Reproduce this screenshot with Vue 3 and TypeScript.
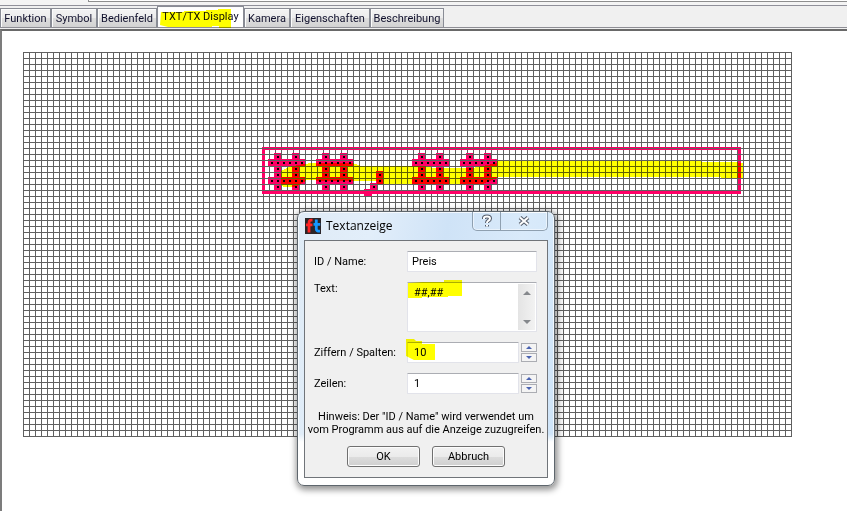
<script setup lang="ts">
import { ref } from 'vue'

const tabs = ['Funktion', 'Symbol', 'Bedienfeld', 'TXT/TX Display', 'Kamera', 'Eigenschaften', 'Beschreibung']
const activeTab = ref('TXT/TX Display')

const name = ref('Preis')
const text = ref('##,##')
const columns = ref(10)
const rows = ref(1)

interface Dot { x: number; y: number }

const CELL = 6
const columnsOfGrid = Array.from({ length: 129 }, (_, i) => i * CELL)
const rowsOfGrid = Array.from({ length: 65 }, (_, i) => i * CELL)

const hash = [
  '.#..#.',
  '######',
  '.#..#.',
  '.#..#.',
  '######',
  '.#..#.',
]
const comma = ['......', '......', '......', '..#...', '..#...', '.#....']

function glyph(pattern: string[], column: number, row: number): Dot[] {
  return pattern.flatMap((line, r) =>
    [...line].flatMap((c, i) => (c === '#' ? [{ x: (column + i) * CELL, y: (row + r) * CELL }] : [])),
  )
}

const dots: Dot[] = [
  ...glyph(hash, 41, 17),
  ...glyph(hash, 49, 17),
  ...glyph(comma, 57, 17),
  ...glyph(hash, 65, 17),
  ...glyph(hash, 73, 17),
]
</script>

<template>
  <div class="app">
    <div class="toolbar"><div class="toolbar-box"></div></div>
    <nav class="tabs" role="tablist">
      <button
        v-for="tab in tabs"
        :key="tab"
        type="button"
        role="tab"
        :aria-selected="tab === activeTab"
        :class="['tab', { active: tab === activeTab }]"
        @click="activeTab = tab"
      >{{ tab }}</button>
      <svg class="marker tab-marker" width="74" height="20" aria-hidden="true">
        <path d="M1 3 H24 V2 H46 V1 H58 V0 H71 V19 H59 V17 H52 V18 H8 L0 16 Z" />
      </svg>
    </nav>

    <main class="pane">
      <svg class="display" width="769" height="385" viewBox="0 0 769 385" shape-rendering="crispEdges">
        <g class="lines">
          <rect v-for="x in columnsOfGrid" :key="x" :x="x" y="0" width="1" height="385" />
        </g>
        <g class="pink">
          <rect x="239" y="95" width="479" height="3" />
          <rect x="239" y="139" width="479" height="3" />
          <rect x="239" y="95" width="3" height="47" />
          <rect x="715" y="95" width="3" height="47" />
          <rect x="341" y="137" width="8" height="7" />
          <rect v-for="(d, i) in dots" :key="i" :x="d.x - 1" :y="d.y - 1" width="7" height="7" />
        </g>
        <g class="lines">
          <rect v-for="y in rowsOfGrid" :key="y" x="0" :y="y" width="769" height="1" />
        </g>
        <path
          class="yellow"
          d="M258 119 L266 115 L280 112 L289 111 H330 L338 114 H400 L410 116 H450 L474 111 V109 H678 V110 H715 V111 H720 V126 H698 V125 H476 L460 132 H354 V129 H302 L284 128 L273 135 H260 L258 132 Z"
        />
        <g class="dots">
          <rect v-for="(d, i) in dots" :key="i" :x="d.x + 2" :y="d.y + 2" width="2" height="2" />
        </g>
      </svg>
    </main>

    <section class="dialog" role="dialog" aria-labelledby="dialog-title">
      <header class="titlebar">
        <svg width="16" height="16" viewBox="0 0 16 16" aria-hidden="true">
          <rect width="16" height="16" fill="#2b2427" />
          <path d="M7.5 2.2 H6.5 Q4 2 4 5 V14.5 M1 6.8 H7.5" fill="none" stroke="#ff2424" stroke-width="2.8" />
          <path d="M11.3 1.5 V11 Q11.3 13.3 15 13.1 M8.5 6.3 H15.2" fill="none" stroke="#1496ff" stroke-width="2.8" />
        </svg>
        <h1 id="dialog-title">Textanzeige</h1>
        <div class="caption">
          <button type="button" aria-label="Hilfe">
            <svg width="12" height="14" viewBox="0 0 12 14">
              <path d="M3 5 V4 Q3 2.5 6 2.5 Q9 2.5 9 4.5 Q9 6 7 7 Q6 7.6 6 9 M6 11 V12.4" class="glyph-edge" />
              <path d="M3 5 V4 Q3 2.5 6 2.5 Q9 2.5 9 4.5 Q9 6 7 7 Q6 7.6 6 9 M6 11 V12.4" class="glyph-core" />
            </svg>
          </button>
          <button type="button" aria-label="Schließen">
            <svg width="14" height="12" viewBox="0 0 14 12">
              <path d="M3 2.5 L11 9.5 M11 2.5 L3 9.5" class="glyph-edge" />
              <path d="M3 2.5 L11 9.5 M11 2.5 L3 9.5" class="glyph-core" />
            </svg>
          </button>
        </div>
      </header>

      <form class="body" @submit.prevent>
        <div class="fields">
          <label for="name">ID / Name:</label>
          <input id="name" v-model="name" class="box name" type="text" />

          <label for="text" class="top">Text:</label>
          <div class="box area">
            <textarea id="text" v-model="text"></textarea>
            <div class="scroll">
              <button type="button" aria-label="Nach oben"><svg width="8" height="4"><path d="M0 4 L4 0 L8 4 Z" /></svg></button>
              <button type="button" aria-label="Nach unten"><svg width="8" height="4"><path d="M0 0 L4 4 L8 0 Z" /></svg></button>
            </div>
            <svg class="marker text-marker" width="54" height="20" aria-hidden="true">
              <path d="M0 4 L14 3 H36 V1 H54 V17 H40 V18 H14 V19 H0 Z" />
            </svg>
          </div>

          <label for="columns">Ziffern / Spalten:</label>
          <div class="spin">
            <input id="columns" v-model.number="columns" class="box" type="text" />
            <div class="arrows">
              <button type="button" aria-label="Spalten mehr" @click="columns++"><svg width="6" height="3"><path d="M0 3 L3 0 L6 3 Z" /></svg></button>
              <button type="button" aria-label="Spalten weniger" @click="columns--"><svg width="6" height="3"><path d="M0 0 L3 3 L6 0 Z" /></svg></button>
            </div>
            <svg class="marker number-marker" width="29" height="22" aria-hidden="true">
              <path d="M0 0 H8 L10 2 H16 V5 H29 V21 H8 L0 17 Z" />
            </svg>
          </div>

          <label for="rows">Zeilen:</label>
          <div class="spin">
            <input id="rows" v-model.number="rows" class="box" type="text" />
            <div class="arrows">
              <button type="button" aria-label="Zeilen mehr" @click="rows++"><svg width="6" height="3"><path d="M0 3 L3 0 L6 3 Z" /></svg></button>
              <button type="button" aria-label="Zeilen weniger" @click="rows--"><svg width="6" height="3"><path d="M0 0 L3 3 L6 0 Z" /></svg></button>
            </div>
          </div>
        </div>
        <p class="hint">Hinweis: Der "ID / Name" wird verwendet um<br />vom Programm aus auf die Anzeige zuzugreifen.</p>
        <div class="actions">
          <button type="button">OK</button>
          <button type="button">Abbruch</button>
        </div>
      </form>
    </section>
  </div>
</template>

<style>
body {
  margin: 0;
  overflow: hidden;
}
</style>

<style scoped>
* {
  box-sizing: border-box;
}

.app {
  display: flex;
  flex-direction: column;
  min-height: 100vh;
  background: #f0f0f0;
  color: #000;
  font: 11px/13px Roboto, Tahoma, sans-serif;
}

button,
input,
textarea {
  margin: 0;
  font: inherit;
  color: inherit;
}

.toolbar {
  height: 6px;
  padding-left: 88px;
  border-bottom: 1px solid #90909a;
  background: #f4f4f4;
}

.toolbar-box {
  height: 2px;
  border: solid #8e8e8e;
  border-width: 0 0 1px 1px;
  background: #fff;
}

.tabs {
  position: relative;
  display: grid;
  grid-template-columns: 51px 46px 60px 87px 46px 80px 74px;
  align-items: end;
  height: 22px;
  border-bottom: 1px solid #8e8e95;
}

.tab {
  height: 19px;
  padding: 0;
  border: 1px solid #898c95;
  border-width: 1px 1px 0;
  background: linear-gradient(#f3f3f3, #ececec 50%, #dedede 50%, #d2d2d2);
  box-shadow: inset 1px 1px #fcfcfc;
  color: #10102c;
  text-align: center;
  white-space: nowrap;
}

.tab.active {
  height: 21px;
  padding-bottom: 2px;
  background: #fff;
}

.marker {
  position: absolute;
  pointer-events: none;
  mix-blend-mode: multiply;
}

.marker path,
.yellow {
  fill: #ffff00;
}

.tab-marker {
  left: 160px;
  top: 3px;
}

.pane {
  flex: 1;
  margin-top: 1px;
  padding: 21px;
  border: solid #696969;
  border-width: 2px 0 0 2px;
  border-left-color: #7c7c7c;
  background: #fff;
}

.display {
  display: block;
}

.pink {
  fill: #ff0066;
}

.yellow {
  mix-blend-mode: multiply;
}

.lines {
  fill: #606060;
}

.dots {
  fill: #000;
}

.dialog {
  position: absolute;
  left: 297px;
  top: 211px;
  width: 258px;
  padding: 0 6px 7px;
  border: 1px solid #5e666d;
  border-radius: 7px;
  background: linear-gradient(transparent 222px, #fff 230px), linear-gradient(100deg, #dfebf6, #e2eefa 25%, #cfe3f7 50%, #d9eafa 75%, #cee4f9);
  box-shadow: inset 0 0 0 1px #ffffffb0, 1px 2px 6px 2px #0000006b;
}

.titlebar {
  display: flex;
  align-items: center;
  gap: 5px;
  height: 28px;
  padding-left: 1px;
}

h1 {
  flex: 1;
  margin: 0;
  font: 12px/16px "Open Sans", sans-serif;
}

.caption {
  display: flex;
  align-self: flex-start;
  border: 1px solid #8fa0b0;
  border-top: 0;
  border-radius: 0 0 5px 5px;
  box-shadow: inset 0 0 0 1px #ffffff80;
}

.caption button {
  display: grid;
  place-items: center;
  width: 46px;
  height: 18px;
  padding: 0;
  border: 0;
  background: none;
}

.caption button:first-child {
  width: 28px;
  border-right: 1px solid #8fa0b0;
}

.glyph-edge {
  fill: none;
  stroke: #535b69;
  stroke-width: 4;
}

.glyph-core {
  fill: none;
  stroke: #fff;
  stroke-width: 2;
}

.body {
  padding: 10px 9px;
  border: 1px solid #707479;
  background: #f0f0f0;
}

.fields {
  display: grid;
  grid-template-columns: 93px 130px;
  row-gap: 10px;
}

label {
  padding-top: 4px;
  white-space: nowrap;
}

label.top {
  padding-top: 0;
}

.box {
  width: 100%;
  height: 21px;
  padding: 0 6px;
  border: 1px solid #e2e3ea;
  border-top-color: #abadb3;
  border-radius: 1px;
  background: #fff;
}

.name {
  padding: 0 4px;
}

.area {
  position: relative;
  display: flex;
  height: 50px;
  padding: 0;
}

textarea {
  flex: 1;
  min-width: 0;
  padding: 3px 6px;
  border: 0;
  outline: 0;
  background: none;
  resize: none;
  overflow: hidden;
}

.scroll {
  display: flex;
  flex-direction: column;
  justify-content: space-between;
  width: 17px;
  margin: 1px;
  padding: 7px 0 6px;
  background: linear-gradient(90deg, #e4e4e4, #f2f2f2);
}

.scroll button {
  display: grid;
  place-items: center;
  padding: 0;
  border: 0;
  background: none;
  fill: #85888c;
}

.text-marker {
  left: 0;
  top: -4px;
}

.spin {
  position: relative;
  display: flex;
  gap: 2px;
}

.spin .box {
  flex: 1;
  min-width: 0;
}

.arrows {
  display: flex;
  flex-direction: column;
  gap: 1px;
  padding-top: 1px;
}

.arrows button {
  display: grid;
  place-items: center;
  width: 16px;
  height: 9px;
  padding: 0;
  border: 1px solid #abadb3;
  background: #f4f4f4;
  fill: #4a63b0;
}

.number-marker {
  left: -1px;
  top: -3px;
}

.hint {
  margin: 16px -8px 10px;
  text-align: center;
  white-space: nowrap;
}

.actions {
  display: flex;
  justify-content: center;
  gap: 12px;
}

.actions button {
  width: 73px;
  height: 21px;
  padding: 0;
  border: 1px solid #707070;
  border-radius: 3px;
  background: linear-gradient(#f2f2f2, #ebebeb 50%, #dddddd 50%, #cfcfcf);
  box-shadow: inset 0 0 0 1px #fcfcfc;
}
</style>
